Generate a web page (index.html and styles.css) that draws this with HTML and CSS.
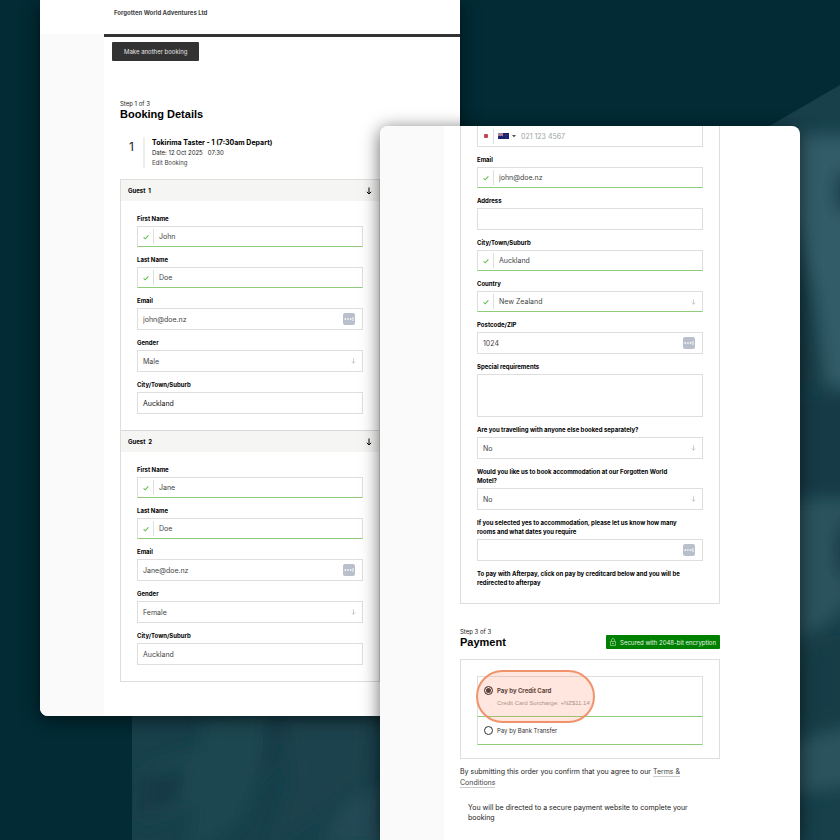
FILE: index.html
```html
<!DOCTYPE html>
<html lang="en">
<head>
  <meta charset="UTF-8" />
  <meta name="viewport" content="width=device-width, initial-scale=1.0"/>
  <title>Forgotten World Adventures - Booking</title>
  <link rel="stylesheet" href="styles.css">
</head>
<body>

  <!-- shared icons -->
  <svg class="sprite" aria-hidden="true">
    <symbol id="check" viewBox="0 0 6 6"><path d="M.6 3.400 2.200 4.800 5.400 1.400" fill="none" stroke="#62bd4d" stroke-width="1.1"/></symbol>
    <symbol id="arrow" viewBox="0 0 6 8"><path d="M3 .5V7M.8 4.800 3 7l2.200-2.200" fill="none" stroke="currentColor"/></symbol>
    <symbol id="keys" viewBox="0 0 12 12">
      <rect width="12" height="12" rx="2" fill="#b9c0cc"/>
      <path d="M1.500 6h1.500M4.200 6h1.500M6.900 6h1.500" stroke="#fff" stroke-width="1.500"/>
      <path d="M10 4v4" stroke="#fff" stroke-width=".8"/>
    </symbol>
  </svg>

  <svg class="backdrop" viewBox="0 0 840 840" preserveAspectRatio="none" aria-hidden="true">
    <defs>
      <clipPath id="mark"><path d="M132 840V496L840 85V840z"/></clipPath>
      <filter id="soft" x="-30%" y="-30%" width="160%" height="160%"><feGaussianBlur stdDeviation="8"/></filter>
    </defs>
    <g clip-path="url(#mark)">
      <rect width="840" height="840" fill="#17404b"/>
      <g filter="url(#soft)">
        <path d="M770 135h90V390L826 385 815 300 798 235 770 200z" fill="#315c67"/>
        <path d="M790 230l16 60 10 95-30 5z" fill="#123a45"/>
        <ellipse cx="845" cy="192" rx="8" ry="22" fill="#0d323d"/>
        <path d="M780 395h80v98h-80z" fill="#123b46"/>
        <path d="M780 500h80v90l-35 35-45 20z" fill="#2a525d"/>
        <ellipse cx="846" cy="550" rx="10" ry="30" fill="#123b46"/>
        <path d="M780 655l70-30v95l-70 20z" fill="#143c47"/>
        <path d="M780 745l80-20v60l-80 10z" fill="#29525d"/>
        <path d="M205 716l62-8-5 60-25 55-50 30 8-50-55 20V770l60-20z" fill="#1e4751"/>
        <path d="M285 716h90l-8 60-60 45-35 25 20-60z" fill="#1a434e"/>
        <path d="M268 716l18 2-10 44-18 20zM140 775l48-5-10 30-40 20z" fill="#143b46"/>
        <path d="M345 800l40-15v60h-65z" fill="#204854"/>
      </g>
    </g>
  </svg>

  <div class="stage">

    <section class="sheet sheet-back">
      <header class="sheet-top">Forgotten World Adventures Ltd</header>
      <div class="sheet-main sheet-main-ruled">
        <div class="toolbar"><button type="button" class="btn">Make another booking</button></div>

        <p class="step">Step 1 of 3</p>
        <h1>Booking Details</h1>

        <div class="trip">
          <span class="trip-count">1</span>
          <div class="trip-info">
            <h2>Tokirima Taster - 1 (7:30am Depart)</h2>
            <p>Date: 12 Oct 2025 &nbsp; 07:30</p>
            <a href="#">Edit Booking</a>
          </div>
        </div>

        <form class="panel">
          <h3 class="guest-title">Guest &nbsp;1 <svg><use href="#arrow"/></svg></h3>
          <div class="fields">
            <label for="g1-first">First Name</label>
            <div class="control valid"><span class="mark"><svg><use href="#check"/></svg></span><input id="g1-first" type="text" value="John"></div>
            <label for="g1-last">Last Name</label>
            <div class="control valid"><span class="mark"><svg><use href="#check"/></svg></span><input id="g1-last" type="text" value="Doe"></div>
            <label for="g1-email">Email</label>
            <div class="control"><input id="g1-email" type="email" value="john@doe.nz"><svg class="keys"><use href="#keys"/></svg></div>
            <label for="g1-gender">Gender</label>
            <div class="control"><select id="g1-gender"><option>Male</option><option>Female</option></select><svg class="arrow"><use href="#arrow"/></svg></div>
            <label for="g1-city">City/Town/Suburb</label>
            <div class="control active"><input id="g1-city" type="text" value="Auckland"></div>
          </div>

          <h3 class="guest-title guest-next">Guest &nbsp;2 <svg><use href="#arrow"/></svg></h3>
          <div class="fields">
            <label for="g2-first">First Name</label>
            <div class="control valid"><span class="mark"><svg><use href="#check"/></svg></span><input id="g2-first" type="text" value="Jane"></div>
            <label for="g2-last">Last Name</label>
            <div class="control valid"><span class="mark"><svg><use href="#check"/></svg></span><input id="g2-last" type="text" value="Doe"></div>
            <label for="g2-email">Email</label>
            <div class="control"><input id="g2-email" type="email" value="Jane@doe.nz"><svg class="keys"><use href="#keys"/></svg></div>
            <label for="g2-gender">Gender</label>
            <div class="control"><select id="g2-gender"><option>Female</option><option>Male</option></select><svg class="arrow"><use href="#arrow"/></svg></div>
            <label for="g2-city">City/Town/Suburb</label>
            <div class="control"><input id="g2-city" type="text" value="Auckland"></div>
          </div>
        </form>
      </div>
    </section>

    <section class="sheet sheet-front">
      <div class="sheet-main">
        <form class="panel panel-cut">
          <div class="fields">
            <div class="control control-cut">
              <span class="mark"><i class="required"></i></span>
              <svg class="flag" viewBox="0 0 11 6">
                <rect width="11" height="6" fill="#17246f"/>
                <path d="M0 0l5 3M5 0 0 3" stroke="#dfe3f2" stroke-width=".7"/>
                <path d="M2.500 0v3M0 1.500h5" stroke="#fff" stroke-width="1"/>
                <path d="M2.500 0v3M0 1.500h5" stroke="#d0343f" stroke-width=".6"/>
                <path d="M8 1v.6M8 4.200v.7M7 2.600h.6M9 2.300h.6" stroke="#c9405a" stroke-width=".6"/>
              </svg>
              <svg class="caret" viewBox="0 0 4 3"><path d="M0 0h4L2 2.500z" fill="#555"/></svg>
              <input type="tel" aria-label="Phone" placeholder="021 123 4567">
            </div>
            <label for="email">Email</label>
            <div class="control valid"><span class="mark"><svg><use href="#check"/></svg></span><input id="email" type="email" value="john@doe.nz"></div>
            <label for="address">Address</label>
            <div class="control"><input id="address" type="text"></div>
            <label for="city">City/Town/Suburb</label>
            <div class="control valid"><span class="mark"><svg><use href="#check"/></svg></span><input id="city" type="text" value="Auckland"></div>
            <label for="country">Country</label>
            <div class="control valid"><span class="mark"><svg><use href="#check"/></svg></span><select id="country"><option>New Zealand</option></select><svg class="arrow"><use href="#arrow"/></svg></div>
            <label for="zip">Postcode/ZIP</label>
            <div class="control"><input id="zip" type="text" value="1024"><svg class="keys"><use href="#keys"/></svg></div>
            <label for="special">Special requirements</label>
            <textarea id="special"></textarea>
            <label for="travel">Are you travelling with anyone else booked separately?</label>
            <div class="control"><select id="travel"><option>No</option><option>Yes</option></select><svg class="arrow"><use href="#arrow"/></svg></div>
            <label for="motel">Would you like us to book accommodation at our Forgotten World Motel?</label>
            <div class="control"><select id="motel"><option>No</option><option>Yes</option></select><svg class="arrow"><use href="#arrow"/></svg></div>
            <label for="rooms">If you selected yes to accommodation, please let us know how many rooms and what dates you require</label>
            <div class="control"><input id="rooms" type="text"><svg class="keys"><use href="#keys"/></svg></div>
            <p class="hint">To pay with Afterpay, click on pay by creditcard below and you will be redirected to afterpay</p>
          </div>
        </form>

        <div class="pay-head">
          <div>
            <p class="step">Step 3 of 3</p>
            <h1>Payment</h1>
          </div>
          <span class="secure">
            <svg viewBox="0 0 6 8"><path d="M1.500 3.500V2a1.500 1.500 0 0 1 3 0v1.500M.5 3.500h5v4h-5zM3 4.800v1.400M2 5.500h2" fill="none" stroke="#b7dfb7" stroke-width=".6"/></svg>
            Secured with 2048-bit encryption
          </span>
        </div>

        <form class="panel pay-panel">
          <div class="option option-card">
            <input type="radio" name="pay" id="pay-card" checked>
            <div>
              <label for="pay-card">Pay by Credit Card</label>
              <p class="surcharge">Credit Card Surcharge: <b>+NZ$11.14</b></p>
            </div>
            <span class="highlight"></span>
          </div>
          <div class="option">
            <input type="radio" name="pay" id="pay-bank">
            <label for="pay-bank">Pay by Bank Transfer</label>
          </div>
        </form>

        <p class="terms">By submitting this order you confirm that you agree to our <a href="#">Terms &amp; Conditions</a></p>
        <p class="redirect">You will be directed to a secure payment website to complete your booking</p>
      </div>
    </section>

  </div>
</body>
</html>
```
FILE: styles.css
```css
* {
  box-sizing: border-box;
}

body {
  margin: 0;
  background: #022b35;
  font-family: Inter, "Liberation Sans", sans-serif;
  font-size: 7px;
  color: #222;
}

h1, h2, h3, p {
  margin: 0;
}

input, select, textarea, button {
  font: inherit;
  color: inherit;
}

.sprite {
  position: absolute;
  width: 0;
  height: 0;
}

.backdrop {
  position: absolute;
  top: 0;
  left: 0;
  width: 100%;
  height: 100%;
}

/* two overlapping sheets: both share the middle column */
.stage {
  position: relative;
  display: grid;
  grid-template-columns: 340fr 80fr 340fr;
  min-height: 100vh;
  padding: 0 40px;
  overflow: hidden;
}

.sheet {
  grid-row: 1;
  background: #fff;
  box-shadow: 0 3px 18px rgba(0, 0, 0, 0.6);
  overflow: hidden;
}

.sheet-back {
  grid-column: 1 / 3;
  align-self: start;
  border-radius: 0 0 8px 8px;
}

.sheet-front {
  grid-column: 2 / 4;
  display: flex;
  margin-top: 126px;
  border-radius: 8px 8px 0 0;
}

.sheet-top {
  height: 34px;
  padding: 8px 0 0 74px;
  font-size: 6px;
  line-height: 10px;
  font-weight: 700;
  color: #444;
}

.sheet-main {
  flex: 1;
  border-left: 64px solid #fafafa;
  padding: 0 80px 16px 16px;
}

.sheet-main-ruled {
  padding-bottom: 34px;
  background: linear-gradient(#333, #333) top / 100% 3px no-repeat;
}

.toolbar {
  margin: 0 0 38px -8px;
  padding-top: 8px;
}

.btn {
  display: block;
  height: 19px;
  padding: 0 12px;
  border: 0;
  border-radius: 1px;
  background: #333;
  color: #e4e4e4;
  font-size: 6px;
}

.step {
  font-size: 6px;
  line-height: 9px;
}

h1 {
  font-family: "Liberation Sans", sans-serif;
  font-size: 11px;
  line-height: 13px;
  color: #000;
}

.trip {
  display: flex;
  margin: 16px 0 11px;
}

.trip-count {
  width: 25px;
  padding-left: 9px;
  font-size: 12px;
  line-height: 19px;
  border-right: 2px solid #eee;
}

.trip-info {
  padding-left: 7px;
}

.trip-info h2 {
  font-size: 7px;
  line-height: 11px;
  color: #000;
}

.trip-info p {
  font-size: 6px;
  line-height: 9px;
}

.trip-info a {
  display: block;
  font-size: 6px;
  line-height: 11px;
  color: #444;
  text-decoration: none;
}

.panel {
  border: 1px solid #dedede;
}

.panel-cut {
  border-top: 0;
}

.guest-title {
  display: flex;
  justify-content: space-between;
  align-items: center;
  height: 21px;
  padding: 0 7px;
  background: #f5f5f4;
  font-size: 6px;
  color: #000;
}

.guest-title svg {
  width: 6px;
  height: 8px;
}

.guest-next {
  height: 22px;
  border-top: 1px solid #d8dad8;
}

.fields {
  padding: 13px 16px 16px;
}

.panel-cut .fields {
  padding-top: 0;
}

.fields label,
.hint {
  display: block;
  margin-bottom: 3px;
  padding-right: 16px;
  font-size: 6px;
  line-height: 9px;
  font-weight: 700;
  color: #000;
}

.hint {
  margin-bottom: 0;
}

.control {
  display: flex;
  align-items: center;
  height: 22px;
  margin-bottom: 8px;
  border: 1px solid #dedede;
  color: #444;
}

.guest-title + .fields .control:last-child {
  margin-bottom: 0;
}

.control input,
.control select {
  flex: 1;
  min-width: 0;
  height: 100%;
  padding: 0 5px;
  border: 0;
  background: none;
  appearance: none;
  outline: 0;
}

.control input::placeholder {
  color: #9aa5a3;
  opacity: 1;
}

.control.valid {
  height: 21px;
  border-bottom-color: #8fcd7c;
}

.control.active {
  color: #111;
}

.control-cut {
  height: 21px;
  border-top: 0;
}

.mark {
  display: flex;
  justify-content: center;
  align-items: center;
  width: 16px;
  height: 15px;
  border-right: 1px solid #dedede;
}

.mark svg {
  width: 6px;
  height: 6px;
}

.required {
  width: 4px;
  height: 4px;
  border-radius: 1px;
  background: #c8474d;
}

.flag {
  width: 11px;
  height: 6px;
  margin: 0 3px 0 4px;
}

.caret {
  width: 4px;
  height: 3px;
}

.arrow {
  width: 5px;
  height: 6px;
  margin-right: 6px;
  color: #bbb;
}

.keys {
  width: 12px;
  height: 12px;
  margin-right: 7px;
}

textarea {
  display: block;
  width: 100%;
  height: 43px;
  margin-bottom: 8px;
  border: 1px solid #dedede;
  resize: none;
}

.pay-head {
  display: flex;
  justify-content: space-between;
  align-items: flex-end;
  margin: 23px 0 10px;
}

.secure {
  display: flex;
  align-items: center;
  gap: 4px;
  height: 14px;
  padding: 0 4px;
  border-radius: 1px;
  background: #008000;
  color: #e3f3e3;
  font-size: 6px;
}

.secure svg {
  width: 6px;
  height: 8px;
}

.pay-panel {
  padding: 16px 16px 13px;
}

.option {
  position: relative;
  display: flex;
  gap: 4px;
  height: 28px;
  padding: 9px 6px 0;
  border: 1px solid #dedede;
  border-top: 0;
  border-bottom-color: #8fcd7c;
  font-size: 6px;
  line-height: 10px;
  color: #333;
}

.option-card {
  height: 41px;
  border-top: 1px solid #dedede;
}

.option-card label {
  font-weight: 700;
}

.option input {
  width: 9px;
  height: 9px;
  margin: 0;
  border: 1px solid #333;
  border-radius: 50%;
  appearance: none;
}

.option input:checked {
  background: #333;
  box-shadow: inset 0 0 0 1px #fff;
}

.surcharge {
  margin-top: 2px;
  font-family: "Liberation Sans", sans-serif;
  color: #999;
}

.surcharge b {
  font-weight: 400;
}

.highlight {
  position: absolute;
  top: -7px;
  left: -2px;
  width: 119px;
  height: 53px;
  border: 2px solid #f0936b;
  border-radius: 27px;
  background: rgba(255, 130, 90, 0.2);
}

.terms {
  margin-top: 7px;
  padding-right: 8px;
  line-height: 11px;
}

.terms a {
  color: #444;
  text-decoration: none;
  border-bottom: 1px solid #ccc;
}

.redirect {
  margin-top: 15px;
  padding: 0 8px;
  line-height: 10px;
}
```
